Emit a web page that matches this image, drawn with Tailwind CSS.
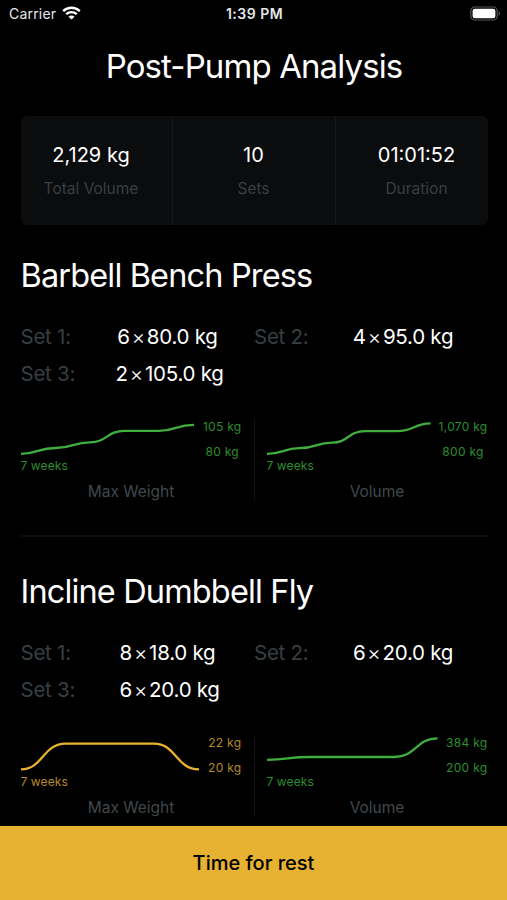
<!doctype html>
<html lang="en">
  <head>
    <meta charset="UTF-8" />
    <meta name="viewport" content="width=device-width, initial-scale=1.0" />
    <title>Post-Pump Analysis</title>
    <script src="https://cdn.jsdelivr.net/npm/@tailwindcss/browser@4"></script>
  </head>
  <body class="bg-black text-white font-['Inter','Liberation_Sans',sans-serif]">
    <div class="h-[900px] w-full flex flex-col overflow-hidden">
      <!-- Status Bar -->
      <header class="h-7 shrink-0 grid grid-cols-3 items-center pl-[9px] pr-[6px] text-[14px] leading-7 text-gray-200">
        <div class="flex items-center gap-[6px]">
          <span class="tracking-[0.2px]">Carrier</span>
          <svg class="w-[19px] h-[14px] -mt-[2px]" viewBox="0 0 19 14" fill="none" stroke="#fff" stroke-width="2.3">
            <path d="M1.2 5.1C5.8 0.6 13.2 0.6 17.8 5.1" />
            <path d="M4.2 8.2C7.2 5.4 11.8 5.4 14.8 8.2" />
            <path d="M9.5 13.6L6.5 10.7C8.2 9.2 10.8 9.2 12.5 10.7Z" fill="#fff" stroke="none" />
          </svg>
        </div>
        <div class="text-center font-semibold text-[14px] tracking-[0.5px] -ml-[1px]">1:39 PM</div>
        <svg class="w-[31px] h-[15px] justify-self-end -mt-[2px]" viewBox="0 0 31 15">
          <rect x="0.8" y="1" width="26.4" height="13" rx="4" fill="none" stroke="#57575a" stroke-width="1.2" />
          <rect x="2.6" y="2.8" width="22.8" height="9.4" rx="2.2" fill="#fff" />
          <path d="M28.7 5.2C30.6 6 30.6 9 28.7 9.8Z" fill="#57575a" />
        </svg>
      </header>

      <main class="flex-1 min-h-0 overflow-hidden pl-[20.5px] pr-[19.5px]">
        <h1 class="mt-[16px] h-[44px] leading-[44px] text-center text-[33px] tracking-[-0.9px] whitespace-nowrap">Post-Pump Analysis</h1>

        <!-- Summary -->
        <div class="mt-[28px] h-[109px] grid grid-cols-[152px_163px_1fr] rounded-md bg-[#0a0c0e] divide-x divide-[#14171a] text-center">
          <div class="pt-[25px] pr-[10px]">
            <div class="text-[20px] leading-7 whitespace-nowrap">2,129 kg</div>
            <div class="mt-[8px] text-[15.5px] leading-6 text-[#373f43] whitespace-nowrap">Total Volume</div>
          </div>
          <div class="pt-[25px]">
            <div class="text-[20px] leading-7">10</div>
            <div class="mt-[8px] text-[15.5px] leading-6 text-[#373f43]">Sets</div>
          </div>
          <div class="pt-[25px] pl-[10px]">
            <div class="text-[20px] leading-7">01:01:52</div>
            <div class="mt-[8px] text-[15.5px] leading-6 text-[#373f43]">Duration</div>
          </div>
        </div>

        <!-- Barbell Bench Press -->
        <section class="mt-[29px] h-[281px]">
          <h2 class="h-[44px] leading-[44px] text-[32.5px] tracking-[-0.85px] whitespace-nowrap">Barbell Bench Press</h2>
          <div class="mt-[20px] grid grid-cols-2 text-[20.5px] tracking-[-0.25px] leading-[37px] whitespace-nowrap">
            <div class="flex gap-[10px]">
              <span class="text-[#373f43]">Set 1:</span>
              <span class="flex-1 text-center">6<span class="mx-[2px] font-light">×</span>80.0 kg</span>
            </div>
            <div class="flex gap-[10px]">
              <span class="text-[#373f43]">Set 2:</span>
              <span class="flex-1 text-center">4<span class="mx-[2px] font-light">×</span>95.0 kg</span>
            </div>
            <div class="flex gap-[10px]">
              <span class="text-[#373f43]">Set 3:</span>
              <span class="flex-1 text-center">2<span class="mx-[2px] font-light">×</span>105.0 kg</span>
            </div>
          </div>
          <div class="mt-[27px] h-[81px] flex justify-between">
            <div class="w-[221px] text-[#2c8f2e]">
              <div class="flex justify-between text-[12px] tracking-[0.3px]">
                <div>
                  <svg class="w-[174px] h-[38px]" viewBox="0 0 174 38" fill="none" stroke="#3fae3f" stroke-width="2.3">
                    <path d="M0 34.8C17 34.8 17 29 34.5 29S52 23.3 69 23.3S86 11.8 103.5 11.8H138C155 11.8 155 5.8 173 5.8" />
                  </svg>
                  <div class="mt-px leading-4 tracking-[0.1px]">7 weeks</div>
                </div>
                <div class="text-center leading-[24.5px] -mt-[4px]"><div>105 kg</div><div>80 kg</div></div>
              </div>
              <div class="mt-[6px] text-center text-[15.5px] leading-6 text-[#41484c]">Max Weight</div>
            </div>
            <div class="w-px bg-[#121415]"></div>
            <div class="w-[221px] text-[#2c8f2e]">
              <div class="flex justify-between text-[12px] tracking-[0.3px]">
                <div>
                  <svg class="w-[164px] h-[38px]" viewBox="0 0 164 38" fill="none" stroke="#3fae3f" stroke-width="2.3">
                    <path d="M0 34.8C16 34.8 16 29.2 32.6 29.2S49 23.7 65.2 23.7S81 12.2 97.8 12.2H130.4C147 12.2 147 4.4 163.5 4.4" />
                  </svg>
                  <div class="mt-px leading-4 tracking-[0.1px]">7 weeks</div>
                </div>
                <div class="text-center leading-[24.5px] -mt-[4px]"><div>1,070 kg</div><div>800 kg</div></div>
              </div>
              <div class="mt-[6px] text-center text-[15.5px] leading-6 text-[#41484c]">Volume</div>
            </div>
          </div>
        </section>

        <hr class="border-t-2 border-[#0b0c0d]" />

        <!-- Incline Dumbbell Fly -->
        <section class="mt-[33px]">
          <h2 class="h-[44px] leading-[44px] text-[32.5px] tracking-[-0.85px] whitespace-nowrap">Incline Dumbbell Fly</h2>
          <div class="mt-[20px] grid grid-cols-2 text-[20.5px] tracking-[-0.25px] leading-[37px] whitespace-nowrap">
            <div class="flex gap-[10px]">
              <span class="text-[#373f43]">Set 1:</span>
              <span class="flex-1 text-center">8<span class="mx-[2px] font-light">×</span>18.0 kg</span>
            </div>
            <div class="flex gap-[10px]">
              <span class="text-[#373f43]">Set 2:</span>
              <span class="flex-1 text-center">6<span class="mx-[2px] font-light">×</span>20.0 kg</span>
            </div>
            <div class="flex gap-[10px]">
              <span class="text-[#373f43]">Set 3:</span>
              <span class="flex-1 text-center">6<span class="mx-[2px] font-light">×</span>20.0 kg</span>
            </div>
          </div>
          <div class="mt-[27px] h-[81px] flex justify-between">
            <div class="w-[221px] text-[#b58a25]">
              <div class="flex justify-between text-[12px] tracking-[0.3px]">
                <div>
                  <svg class="w-[179px] h-[38px]" viewBox="0 0 179 38" fill="none" stroke="#e9b22f" stroke-width="2.3">
                    <path d="M0 34.3C22 34.3 22 8.6 44.5 8.6H133C155 8.6 155 34.3 178 34.3" />
                  </svg>
                  <div class="mt-px leading-4 tracking-[0.1px]">7 weeks</div>
                </div>
                <div class="text-center leading-[24.5px] -mt-[4px]"><div>22 kg</div><div>20 kg</div></div>
              </div>
              <div class="mt-[6px] text-center text-[15.5px] leading-6 text-[#41484c]">Max Weight</div>
            </div>
            <div class="w-px bg-[#121415]"></div>
            <div class="w-[221px] text-[#2c8f2e]">
              <div class="flex justify-between text-[12px] tracking-[0.3px]">
                <div>
                  <svg class="w-[171px] h-[38px]" viewBox="0 0 171 38" fill="none" stroke="#3fae3f" stroke-width="2.3">
                    <path d="M0 24.8C21 24.8 21 22 42.5 22H127.5C149 22 149 3.3 170.5 3.3" />
                  </svg>
                  <div class="mt-px leading-4 tracking-[0.1px]">7 weeks</div>
                </div>
                <div class="text-center leading-[24.5px] -mt-[4px]"><div>384 kg</div><div>200 kg</div></div>
              </div>
              <div class="mt-[6px] text-center text-[15.5px] leading-6 text-[#41484c]">Volume</div>
            </div>
          </div>
        </section>
      </main>

      <button class="h-[74px] shrink-0 bg-[#e7b131] text-black text-[20px] font-medium">Time for rest</button>
    </div>
  </body>
</html>
